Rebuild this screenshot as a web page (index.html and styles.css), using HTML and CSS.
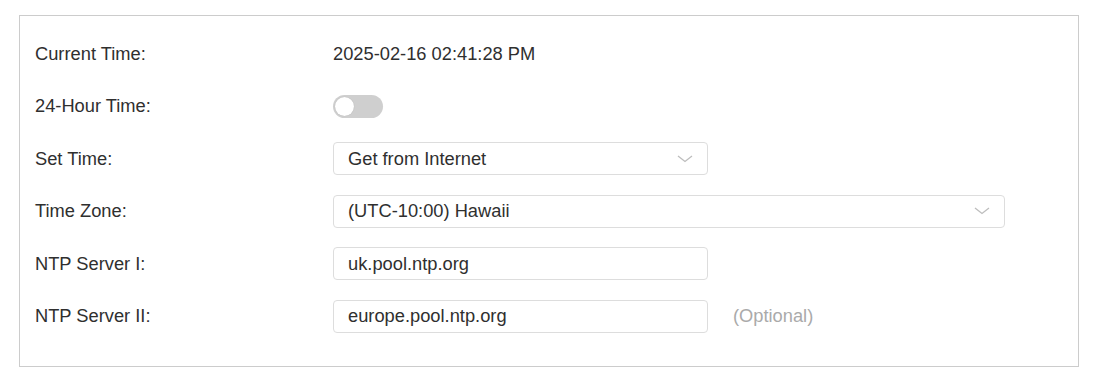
FILE: index.html
```html
<!DOCTYPE html>
<html>
  <head>
    <meta charset="UTF-8">
    <title>Time Settings</title>
    <link rel="stylesheet" href="styles.css">
  </head>
  <body>
    <div class="panel">
      <div class="row">
        <div class="label">Current Time:</div>
        <div class="value">2025-02-16 02:41:28 PM</div>
      </div>

      <div class="row">
        <div class="label">24-Hour Time:</div>
        <div class="toggle"><span class="knob"></span></div>
      </div>

      <div class="row">
        <div class="label">Set Time:</div>
        <div class="select">
          <span>Get from Internet</span>
          <svg class="chevron" width="16" height="8" viewBox="0 0 16 8">
            <path d="M1 1 L8 6.5 L15 1" fill="none" stroke="#bdbdbd" stroke-width="1.3"/>
          </svg>
        </div>
      </div>

      <div class="row">
        <div class="label">Time Zone:</div>
        <div class="select wide">
          <span>(UTC-10:00) Hawaii</span>
          <svg class="chevron" width="16" height="8" viewBox="0 0 16 8">
            <path d="M1 1 L8 6.5 L15 1" fill="none" stroke="#bdbdbd" stroke-width="1.3"/>
          </svg>
        </div>
      </div>

      <div class="row">
        <div class="label">NTP Server I:</div>
        <input class="field" type="text" value="uk.pool.ntp.org">
      </div>

      <div class="row">
        <div class="label">NTP Server II:</div>
        <input class="field" type="text" value="europe.pool.ntp.org">
        <span class="hint">(Optional)</span>
      </div>
    </div>
  </body>
</html>
```

FILE: styles.css
```css
body {
  margin: 0;
  padding: 15px 0 0 19px;
  background: #fff;
  font-family: "Liberation Sans", Arial, sans-serif;
  font-size: 18.3px;
  color: #2f2f2f;
}

.panel {
  width: 1043px;
  border: 1px solid #cccccc;
  padding: 21px 0 33px 15px;
  display: flex;
  flex-direction: column;
  gap: 19.6px;
}

.row {
  display: flex;
  align-items: center;
  height: 33px;
}

.label {
  width: 298px;
  flex-shrink: 0;
}

.toggle {
  width: 50px;
  height: 23px;
  border-radius: 12px;
  background: #cfcfcf;
  display: flex;
  align-items: center;
  padding: 0 2px;
  box-sizing: border-box;
}

.knob {
  width: 19px;
  height: 19px;
  border-radius: 50%;
  background: #fff;
  box-shadow: 0 0 1px rgba(0, 0, 0, 0.2);
}

.select,
.field {
  width: 375px;
  height: 33px;
  box-sizing: border-box;
  border: 1px solid #dddddd;
  border-radius: 4px;
  background: #fff;
  padding: 0 14px;
  font-family: inherit;
  font-size: 18.3px;
  color: #2f2f2f;
}

.select {
  display: flex;
  align-items: center;
  justify-content: space-between;
}

.select.wide {
  width: 672px;
}

.field {
  outline: none;
}

.hint {
  margin-left: 25px;
  color: #aaaaaa;
}
```
